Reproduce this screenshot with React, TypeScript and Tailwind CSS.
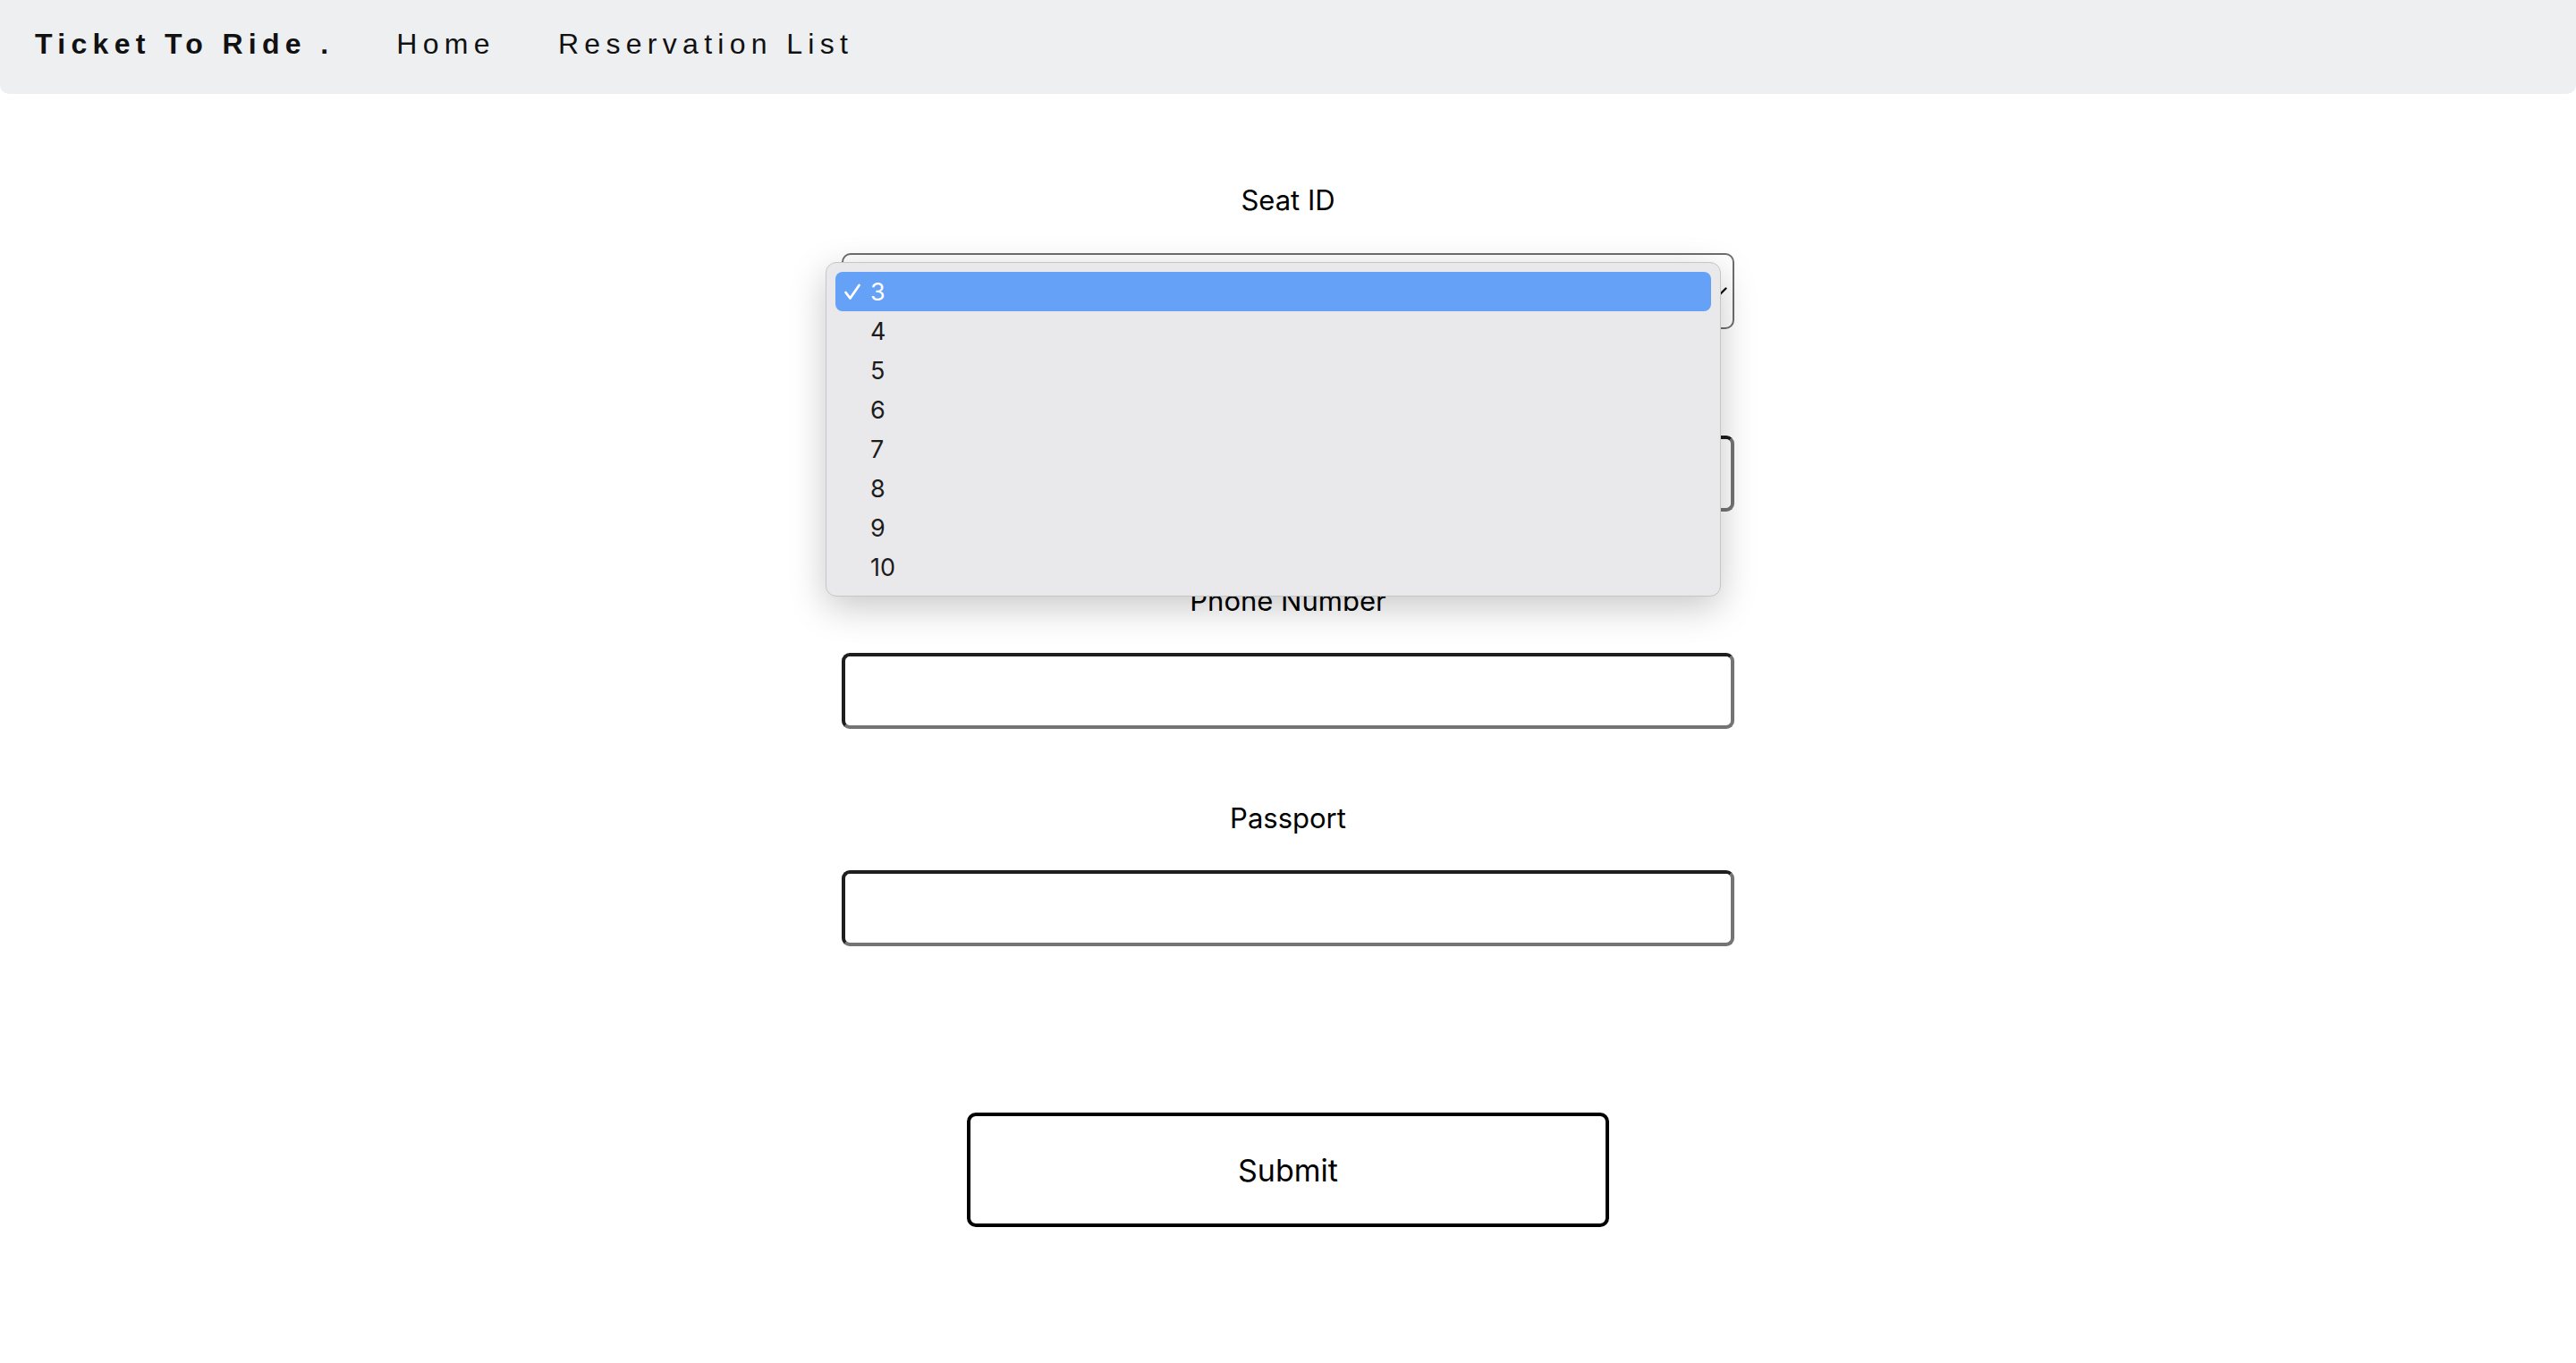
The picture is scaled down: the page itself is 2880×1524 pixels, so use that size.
import React from "react";

const seats = ["3", "4", "5", "6", "7", "8", "9", "10"];

const formFont = { fontFamily: "Inter, 'Noto Sans', sans-serif" };

export default function App() {
  return (
    <div className="min-h-screen bg-white text-black">
      <NavBar />
      <ReservationForm />
    </div>
  );
}

function NavBar() {
  return (
    <nav
      className="flex h-[105px] items-center gap-[70px] rounded-b-[10px] bg-[#eeeff1] pb-[8px] pl-[39px] text-[32px] tracking-[6.3px] text-[#111]"
      style={{ fontFamily: "'Liberation Sans', Arial, sans-serif" }}
    >
      <span className="font-bold">Ticket To Ride .</span>
      <span>Home</span>
      <span>Reservation List</span>
    </nav>
  );
}

function Label({ children }: { children: React.ReactNode }) {
  return <label className="block h-[40px] text-center text-[31px] leading-[40px] text-black">{children}</label>;
}

function TextInput() {
  return (
    <input
      type="text"
      className="block h-[85px] w-[998px] rounded-[9px] border-4 border-t-[#1e1e1e] border-r-[#747474] border-b-[#747474] border-l-[#1e1e1e] bg-white px-4 text-[30px] outline-none"
    />
  );
}

function ReservationForm() {
  return (
    <form className="flex flex-col items-center pt-[99px]" style={formFont} onSubmit={(e) => e.preventDefault()}>
      <Label>Seat ID</Label>
      <div className="relative mt-[39px]">
        <SeatSelect />
        <SeatMenu />
      </div>

      <div className="mt-[40px]">
        <Label>Name</Label>
      </div>
      <div className="mt-[39px]">
        <TextInput />
      </div>

      <div className="mt-[80px]">
        <Label>Phone Number</Label>
      </div>
      <div className="mt-[38px]">
        <TextInput />
      </div>

      <div className="mt-[80px]">
        <Label>Passport</Label>
      </div>
      <div className="mt-[38px]">
        <TextInput />
      </div>

      <button
        type="submit"
        className="mt-[186px] h-[128px] w-[718px] rounded-[10px] border-4 border-black bg-white text-[34px] text-black"
      >
        Submit
      </button>
    </form>
  );
}

function SeatSelect() {
  return (
    <div className="relative h-[85px] w-[998px] rounded-[10px] border-2 border-[#6e6e6e] bg-white">
      <svg
        className="absolute right-[6px] top-1/2 -translate-y-1/2"
        width="17"
        height="10"
        viewBox="0 0 17 10"
        fill="none"
        stroke="#111"
        strokeWidth="2.4"
        strokeLinecap="round"
        strokeLinejoin="round"
      >
        <polyline points="1.5,1.5 8.5,8.5 15.5,1.5" />
      </svg>
    </div>
  );
}

function SeatMenu() {
  // Open native-style dropdown, laid over the fields below.
  return (
    <div className="absolute left-[-18px] top-[10px] z-10 w-[1001px] rounded-[12px] border border-[#c6c6c9] bg-[#e9e8eb] px-[10px] py-[10px] shadow-[0_12px_40px_rgba(0,0,0,0.22)]">
      {seats.map((s, i) => {
        const selected = i === 0;
        return (
          <div
            key={s}
            className={
              selected
                ? "flex h-[44px] items-center rounded-[8px] bg-[#65a2f7] text-white"
                : "flex h-[44px] items-center text-[#1c1c1c]"
            }
          >
            <span className="flex w-[39px] justify-end pr-[10px]">
              {selected && (
                <svg width="20" height="19" viewBox="0 0 20 19" fill="none" stroke="white" strokeWidth="2.8" strokeLinecap="round" strokeLinejoin="round">
                  <polyline points="2.5,10 7.5,16.5 17.5,2" />
                </svg>
              )}
            </span>
            <span className="text-[27px] leading-none">{s}</span>
          </div>
        );
      })}
    </div>
  );
}
